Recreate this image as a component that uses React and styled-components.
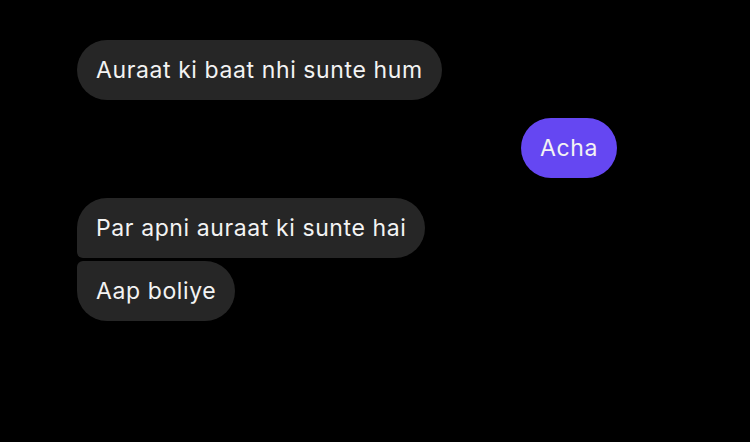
import styled, { createGlobalStyle } from "styled-components";

const Global = createGlobalStyle`
    html, body {
        margin: 0;
        padding: 0;
        background: #000;
    }
    body {
        font-family: Inter, "Noto Sans", "Liberation Sans", sans-serif;
    }
`;

const Thread = styled.div`
    width: 750px;
    height: 442px;
    box-sizing: border-box;
    padding: 40px 133px 0 77px;
    background: #000;
    display: flex;
    flex-direction: column;
`;

const Group = styled.div`
    display: flex;
    flex-direction: column;
    align-items: ${(p) => (p.mine ? "flex-end" : "flex-start")};
    gap: 3px;
    margin-bottom: ${(p) => p.gap || 0}px;
`;

const Bubble = styled.div`
    height: 60px;
    box-sizing: border-box;
    padding: 0 19px 0 19px;
    display: flex;
    align-items: center;
    font-size: 23px;
    letter-spacing: 0.6px;
    color: #f3f3f3;
    background: ${(p) => (p.mine ? "#6547f2" : "#262626")};
    border-radius: ${(p) => p.corners || "30px"};
    white-space: nowrap;
`;

const messages = [
    { mine: false, gap: 18, texts: ["Auraat ki baat nhi sunte hum"] },
    { mine: true, gap: 20, texts: ["Acha"] },
    { mine: false, gap: 0, texts: ["Par apni auraat ki sunte hai", "Aap boliye"] },
];

function corners(i, n) {
    if (n === 1) return "30px";
    if (i === 0) return "30px 30px 30px 6px";
    if (i === n - 1) return "6px 30px 30px 30px";
    return "6px 30px 30px 6px";
}

export default function App() {
    return (
        <>
            <Global />
            <Thread>
                {messages.map((m, gi) => (
                    <Group key={gi} mine={m.mine} gap={m.gap}>
                        {m.texts.map((t, i) => (
                            <Bubble key={i} mine={m.mine} corners={corners(i, m.texts.length)}>
                                {t}
                            </Bubble>
                        ))}
                    </Group>
                ))}
            </Thread>
        </>
    );
}
